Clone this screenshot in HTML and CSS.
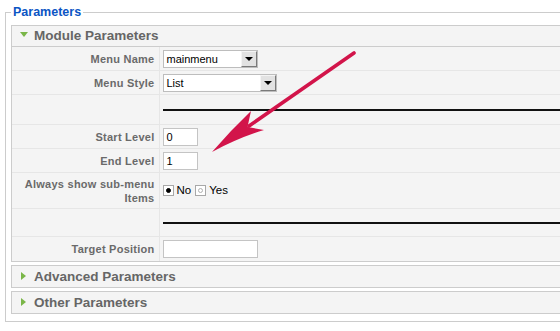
FILE: index.html
```html
<!DOCTYPE html>
<html lang="en">
<head>
  <meta charset="UTF-8">
  <title>Module Parameters</title>
  <link rel="stylesheet" href="styles.css">
</head>
<body>
  <fieldset class="params">
    <legend>Parameters</legend>

    <div class="pane">
      <h3 class="toggler open"><span class="tri-down"></span>Module Parameters</h3>
      <table class="paramlist">
        <tr>
          <td class="key">Menu Name</td>
          <td class="value">
            <div class="select w95"><span class="select-text">mainmenu</span><span class="select-btn"></span></div>
          </td>
        </tr>
        <tr>
          <td class="key">Menu Style</td>
          <td class="value">
            <div class="select w114"><span class="select-text">List</span><span class="select-btn"></span></div>
          </td>
        </tr>
        <tr class="spacer">
          <td class="key"></td>
          <td class="value"><div class="rule"></div></td>
        </tr>
        <tr>
          <td class="key">Start Level</td>
          <td class="value"><div class="text w35">0</div></td>
        </tr>
        <tr>
          <td class="key">End Level</td>
          <td class="value"><div class="text w35">1</div></td>
        </tr>
        <tr class="tall">
          <td class="key">Always show sub-menu Items</td>
          <td class="value">
            <div class="radios">
              <span class="radio checked"></span><span class="radio-label">No</span>
              <span class="radio"></span><span class="radio-label">Yes</span>
            </div>
          </td>
        </tr>
        <tr class="spacer spacer-2">
          <td class="key"></td>
          <td class="value"><div class="rule"></div></td>
        </tr>
        <tr class="last">
          <td class="key">Target Position</td>
          <td class="value"><div class="text w95"></div></td>
        </tr>
      </table>
    </div>

    <div class="pane">
      <h3 class="toggler"><span class="tri-right"></span>Advanced Parameters</h3>
    </div>

    <div class="pane">
      <h3 class="toggler"><span class="tri-right"></span>Other Parameters</h3>
    </div>
  </fieldset>

  <!-- annotation arrow drawn over the form -->
  <svg class="arrow" width="560" height="331" viewBox="0 0 560 331">
    <line x1="354" y1="53" x2="249" y2="126" stroke="#d2144a" stroke-width="3.6" stroke-linecap="round"/>
    <path d="M212,152 Q231,130 251,111 L247.5,127 L264,130 Q238,138 212,152 Z" fill="#d2144a"/>
  </svg>
</body>
</html>
```

FILE: styles.css
```css
body {
  margin: 0;
  font-family: "Liberation Sans", Arial, sans-serif;
  background: #fff;
  overflow: hidden;
}

.params {
  width: 640px;
  margin: 4px 0 0 5px;
  padding: 5px 5px 7px 5px;
  border: 1px solid #ccc;
  box-sizing: border-box;
}

.params legend {
  padding: 0 2px;
  color: #0b55c4;
  font-size: 12.5px;
  font-weight: bold;
  line-height: 16px;
}

.pane {
  background: #f4f4f4;
  border: 1px solid #ccc;
  margin-bottom: 3px;
}

.pane:last-child {
  margin-bottom: 0;
}

.toggler {
  margin: 0;
  height: 21px;
  padding-left: 8px;
  color: #666;
  font-size: 13.5px;
  font-weight: bold;
  line-height: 21px;
}

.toggler.open {
  height: 20px;
  line-height: 20px;
  border-bottom: 1px solid #ccc;
}

.tri-down {
  display: inline-block;
  width: 0;
  height: 0;
  border-left: 4px solid transparent;
  border-right: 4px solid transparent;
  border-top: 5px solid #7ab648;
  margin-right: 6px;
  vertical-align: 3px;
}

.tri-right {
  display: inline-block;
  width: 0;
  height: 0;
  border-top: 4px solid transparent;
  border-bottom: 4px solid transparent;
  border-left: 5px solid #7ab648;
  margin: 0 8px 0 1px;
  vertical-align: 1px;
}

.paramlist {
  width: 100%;
  border-collapse: collapse;
}

.paramlist td {
  border-bottom: 1px solid #e6e6e6;
  padding: 3px 3px 2px 3px;
  vertical-align: middle;
}

.paramlist tr.last td {
  border-bottom: none;
  padding-bottom: 3px;
}

.paramlist td.key {
  width: 147px;
  box-sizing: border-box;
  padding-right: 4px;
  border-right: 1px solid #e6e6e6;
  color: #6a6a6a;
  font-size: 11px;
  font-weight: bold;
  letter-spacing: 0.25px;
  line-height: 14px;
  text-align: right;
}

.paramlist tr.tall td {
  padding-top: 4px;
  padding-bottom: 3px;
}

.paramlist tr.spacer td {
  height: 29px;
  padding: 0;
}

.paramlist tr.spacer-2 td {
  height: 27px;
}

.paramlist tr.spacer td.value {
  padding-left: 3px;
}

.rule {
  border-top: 2px solid #111;
  margin-top: 1px;
}

.select {
  display: flex;
  align-items: center;
  height: 18px;
  box-sizing: border-box;
  border: 1px solid #bdbdbd;
  background: #fff;
  font-size: 11px;
  color: #000;
}

.select-text {
  flex: 1;
  padding-left: 3px;
}

.select-btn {
  position: relative;
  width: 16px;
  height: 16px;
  box-sizing: border-box;
  background: #e2e2e2;
  border: 1px solid;
  border-color: #f4f4f4 #7a7a7a #7a7a7a #f4f4f4;
}

.select-btn::after {
  content: "";
  position: absolute;
  left: 3px;
  top: 5px;
  border-left: 4px solid transparent;
  border-right: 4px solid transparent;
  border-top: 4px solid #000;
}

.w95 { width: 95px; }
.w114 { width: 114px; }
.w35 { width: 35px; }

.text {
  height: 18px;
  box-sizing: border-box;
  border: 1px solid #c4c4c4;
  background: #fff;
  padding-left: 3px;
  font-size: 11px;
  line-height: 16px;
  color: #000;
}

.radios {
  display: flex;
  align-items: center;
  margin-top: -2px;
}

.radio {
  position: relative;
  width: 11px;
  height: 11px;
  box-sizing: border-box;
  border: 1px solid #a8a8a8;
  background: #fff;
}

.radio::after {
  content: "";
  position: absolute;
  left: 2px;
  top: 2px;
  width: 5px;
  height: 5px;
  box-sizing: border-box;
  border: 1px solid #b0b0b0;
  border-radius: 50%;
}

.radio.checked::after {
  background: #000;
  border-color: #000;
}

.radio-label {
  margin: 0 4px 0 3px;
  font-size: 11.5px;
  color: #000;
}

.arrow {
  position: absolute;
  top: 0;
  left: 0;
  pointer-events: none;
}
```
